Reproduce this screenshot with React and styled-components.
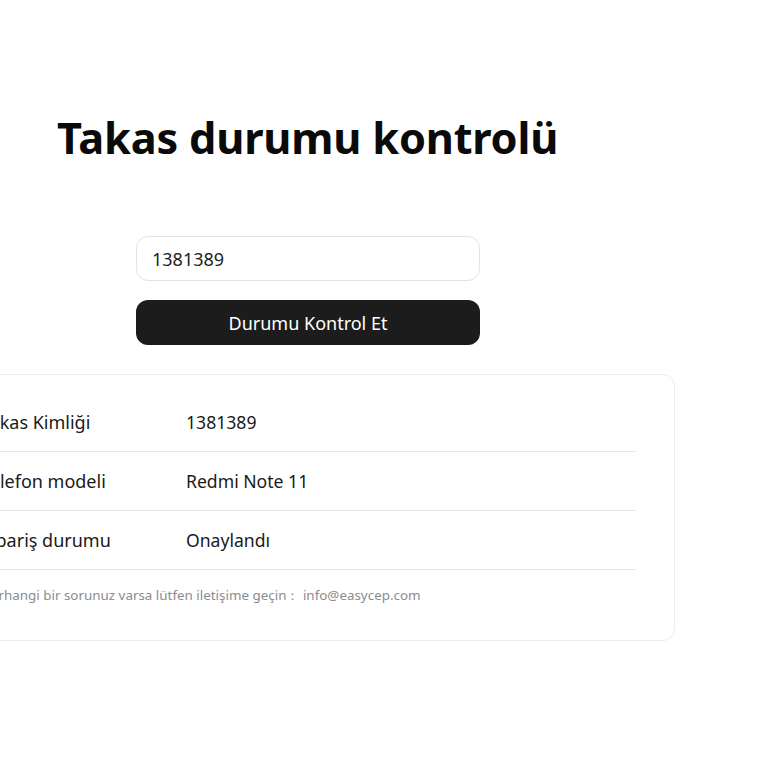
import styled, { createGlobalStyle } from "styled-components";

const GlobalStyle = createGlobalStyle`
  html, body {
    margin: 0;
    padding: 0;
    background: #fff;
    overflow: hidden;
  }
  body {
    font-family: "Noto Sans", "Liberation Sans", sans-serif;
    color: #111;
  }
`;

const rows = [
  { label: "Takas Kimliği", value: "1381389" },
  { label: "Telefon modeli", value: "Redmi Note 11" },
  { label: "Sipariş durumu", value: "Onaylandı" },
];

const App = () => {
  return (
    <>
      <GlobalStyle />
      <Page>
        <Title>Takas durumu kontrolü</Title>
        <Form>
          <Input defaultValue="1381389" />
          <Button>Durumu Kontrol Et</Button>
        </Form>
        <Card>
          {rows.map((r) => (
            <Row key={r.label}>
              <Label>{r.label}</Label>
              <Value>{r.value}</Value>
            </Row>
          ))}
          <Note>Herhangi bir sorunuz varsa lütfen iletişime geçin： info@easycep.com</Note>
        </Card>
      </Page>
    </>
  );
};

export default App;

const Page = styled.div`
  width: 768px;
  height: 768px;
  padding: 108px 0 0 57px;
  box-sizing: border-box;
`;

const Title = styled.h1`
  margin: 0;
  font-size: 43.3px;
  font-weight: 700;
  line-height: 60px;
  color: #0a0a0a;
  letter-spacing: -0.2px;
`;

const Form = styled.div`
  margin: 68px 0 0 79px;
  width: 344px;
  display: flex;
  flex-direction: column;
  gap: 19px;
`;

const Input = styled.input`
  height: 45px;
  box-sizing: border-box;
  border: 1px solid #e3e3e3;
  border-radius: 12px;
  padding: 0 15px;
  font-family: inherit;
  font-size: 18px;
  color: #222;
  outline: none;
`;

const Button = styled.button`
  height: 45px;
  border: none;
  border-radius: 12px;
  background: #1c1c1c;
  color: #fff;
  font-family: inherit;
  font-size: 18px;
`;

const Card = styled.div`
  margin: 29px 0 0 -115px;
  width: 733px;
  box-sizing: border-box;
  border: 1px solid #ececec;
  border-radius: 12px;
  padding: 18px 38px 0;
  height: 267px;
`;

const Row = styled.div`
  display: grid;
  grid-template-columns: 205px 1fr;
  align-items: center;
  height: 58px;
  border-bottom: 1px solid #e6e6e6;
`;

const Label = styled.div`
  font-size: 18px;
  color: #1a1a1a;
`;

const Value = styled.div`
  font-size: 17.6px;
  color: #1a1a1a;
`;

const Note = styled.div`
  padding-top: 16px;
  font-size: 13.4px;
  color: #8c8c8c;
`;
